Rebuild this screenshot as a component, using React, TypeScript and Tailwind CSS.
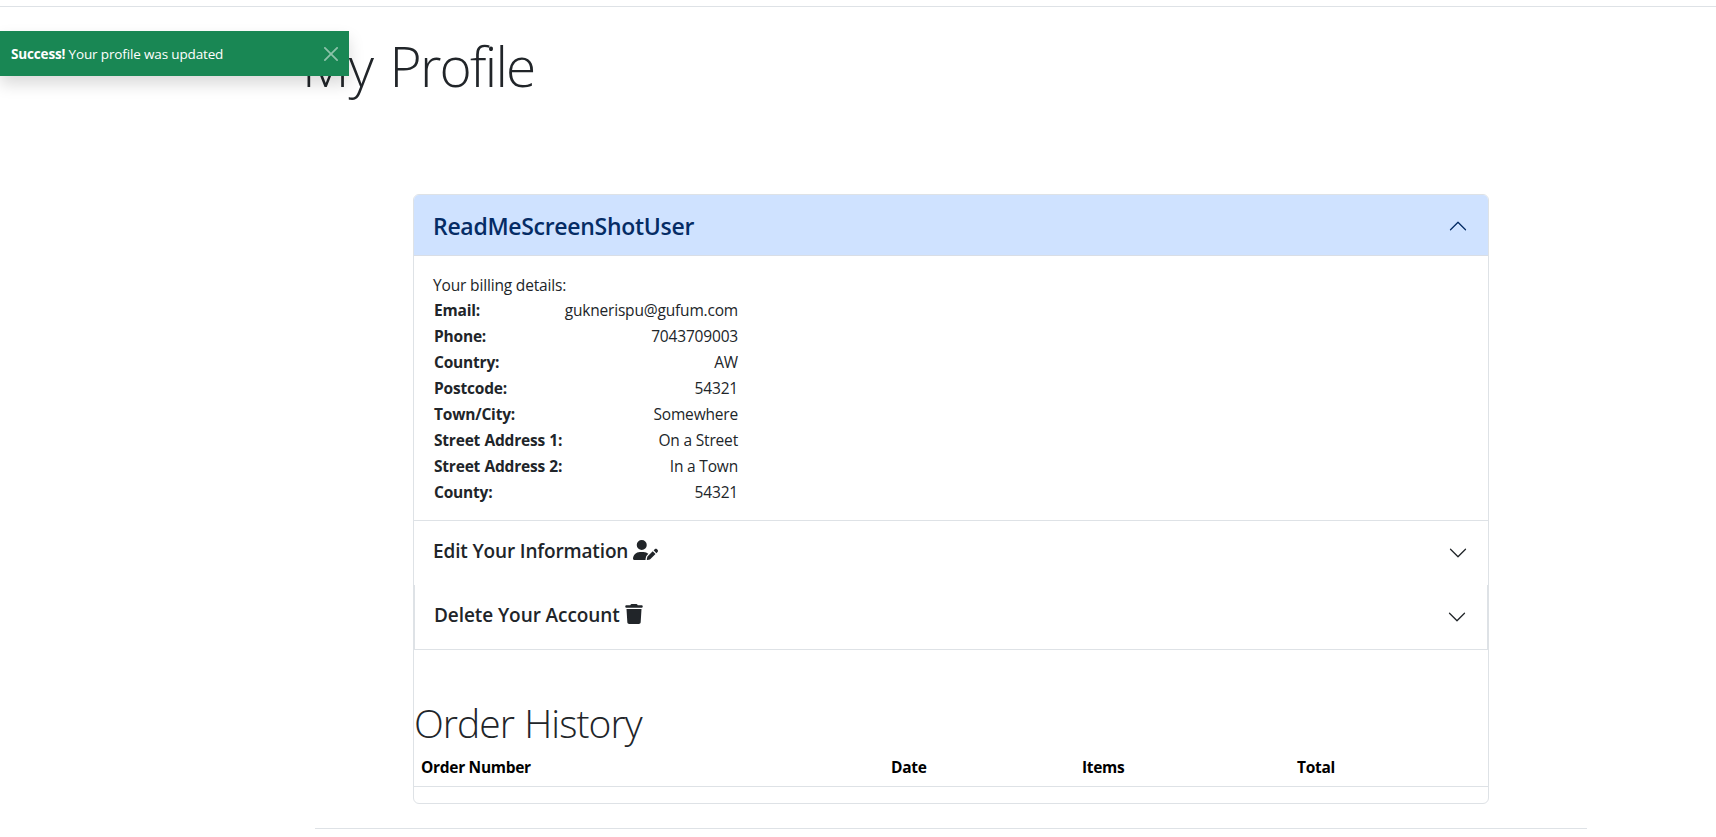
import { FaUserPen, FaTrash } from "react-icons/fa6";

const details: [string, string][] = [
  ["Email:", "guknerispu@gufum.com"],
  ["Phone:", "7043709003"],
  ["Country:", "AW"],
  ["Postcode:", "54321"],
  ["Town/City:", "Somewhere"],
  ["Street Address 1:", "On a Street"],
  ["Street Address 2:", "In a Town"],
  ["County:", "54321"],
];

function Chevron({ className = "" }: { className?: string }) {
  return (
    <svg viewBox="0 0 16 16" className={`h-5 w-5 shrink-0 ${className}`} fill="currentColor">
      <path
        fillRule="evenodd"
        d="M1.646 4.646a.5.5 0 0 1 .708 0L8 10.293l5.646-5.647a.5.5 0 0 1 .708.708l-6 6a.5.5 0 0 1-.708 0l-6-6a.5.5 0 0 1 0-.708z"
      />
    </svg>
  );
}

function Toast() {
  return (
    <div className="absolute left-0 top-[31px] flex h-[45px] w-[349px] items-center justify-between bg-[#198754] pl-[11px] pr-[11px] text-white shadow-[0_8px_16px_rgba(0,0,0,0.15)]">
      <p className="pt-[2px] text-[13.5px] tracking-[-0.15px]">
        <strong className="font-bold">Success!</strong> Your profile was updated
      </p>
      <svg viewBox="0 0 16 16" className="h-[14px] w-[14px] opacity-50" fill="currentColor">
        <path d="M.293.293a1 1 0 0 1 1.414 0L8 6.586 14.293.293a1 1 0 1 1 1.414 1.414L9.414 8l6.293 6.293a1 1 0 0 1-1.414 1.414L8 9.414l-6.293 6.293a1 1 0 0 1-1.414-1.414L6.586 8 .293 1.707a1 1 0 0 1 0-1.414z" />
      </svg>
    </div>
  );
}

export default function App() {
  return (
    <div className="relative h-[837px] overflow-hidden bg-white pt-[6px] font-['Open_Sans',sans-serif] text-[#212529]">
      <div className="h-px bg-[#dee2e6]" />
      <Toast />
      <h1 className="ml-[302px] mt-[25px] text-[55px] font-light leading-[67px] tracking-[-1.8px] [word-spacing:4px]">
        <span className="tracking-[-0.8px]">My</span> Profile
      </h1>

      <main className="ml-[413px] mt-[95px] h-[610px] w-[1076px] overflow-hidden rounded-[6px] border border-[#dee2e6]">
        <button className="flex h-[61px] w-full items-center justify-between border-b border-[#d9dee6] bg-[#cfe2ff] pl-[19px] pr-5 pt-[2px] text-[#052c65]">
          <span className="text-[23px] font-semibold tracking-[-0.3px]">ReadMeScreenShotUser</span>
          <Chevron className="rotate-180" />
        </button>
        <section className="h-[265px] border-b border-[#dee2e6] pl-[19px] pt-[17px] text-[15.5px]">
          <p className="h-[25px] leading-6 tracking-[-0.16px]">Your billing details:</p>
          <dl className="w-[306px]">
            {details.map(([label, value]) => (
              <div key={label} className="flex h-[26px] items-center justify-between pl-px pr-px">
                <dt className="font-bold tracking-[-0.2px] [word-spacing:0.5px]">{label}</dt>
                <dd className="tracking-[-0.18px]">{value}</dd>
              </div>
            ))}
          </dl>
        </section>
        <button className="flex h-[64px] w-full items-center justify-between pl-[19px] pr-5">
          <span className="flex items-center gap-[5px] pb-[4px] text-[19px] font-semibold tracking-[-0.15px]">
            Edit Your Information <FaUserPen className="mb-[2px] h-[20px] w-[25px]" />
          </span>
          <Chevron />
        </button>
        <button className="flex h-[65px] w-full items-center justify-between border-x border-b border-[#dee2e6] pl-[19px] pr-5">
          <span className="flex items-center gap-[5px] pb-[4px] text-[19px] font-semibold tracking-[-0.08px]">
            Delete Your Account <FaTrash className="mb-[2px] h-[20px] w-[18px]" />
          </span>
          <Chevron />
        </button>
        <section className="pt-[49px]">
          <h2 className="h-[56px] text-[39px] font-light leading-[48px] tracking-[-0.95px] [word-spacing:1px]">Order History</h2>
          <div className="grid h-[32px] grid-cols-[470px_191px_215px_1fr] border-b border-[#dee2e6] pl-[7px] text-[15.5px] font-bold leading-6 tracking-[-0.3px] text-black">
            <span>Order Number</span>
            <span>Date</span>
            <span>Items</span>
            <span>Total</span>
          </div>
        </section>
      </main>
      <div className="ml-[315px] mt-6 h-px w-[1272px] bg-[#dee2e6]" />
    </div>
  );
}
